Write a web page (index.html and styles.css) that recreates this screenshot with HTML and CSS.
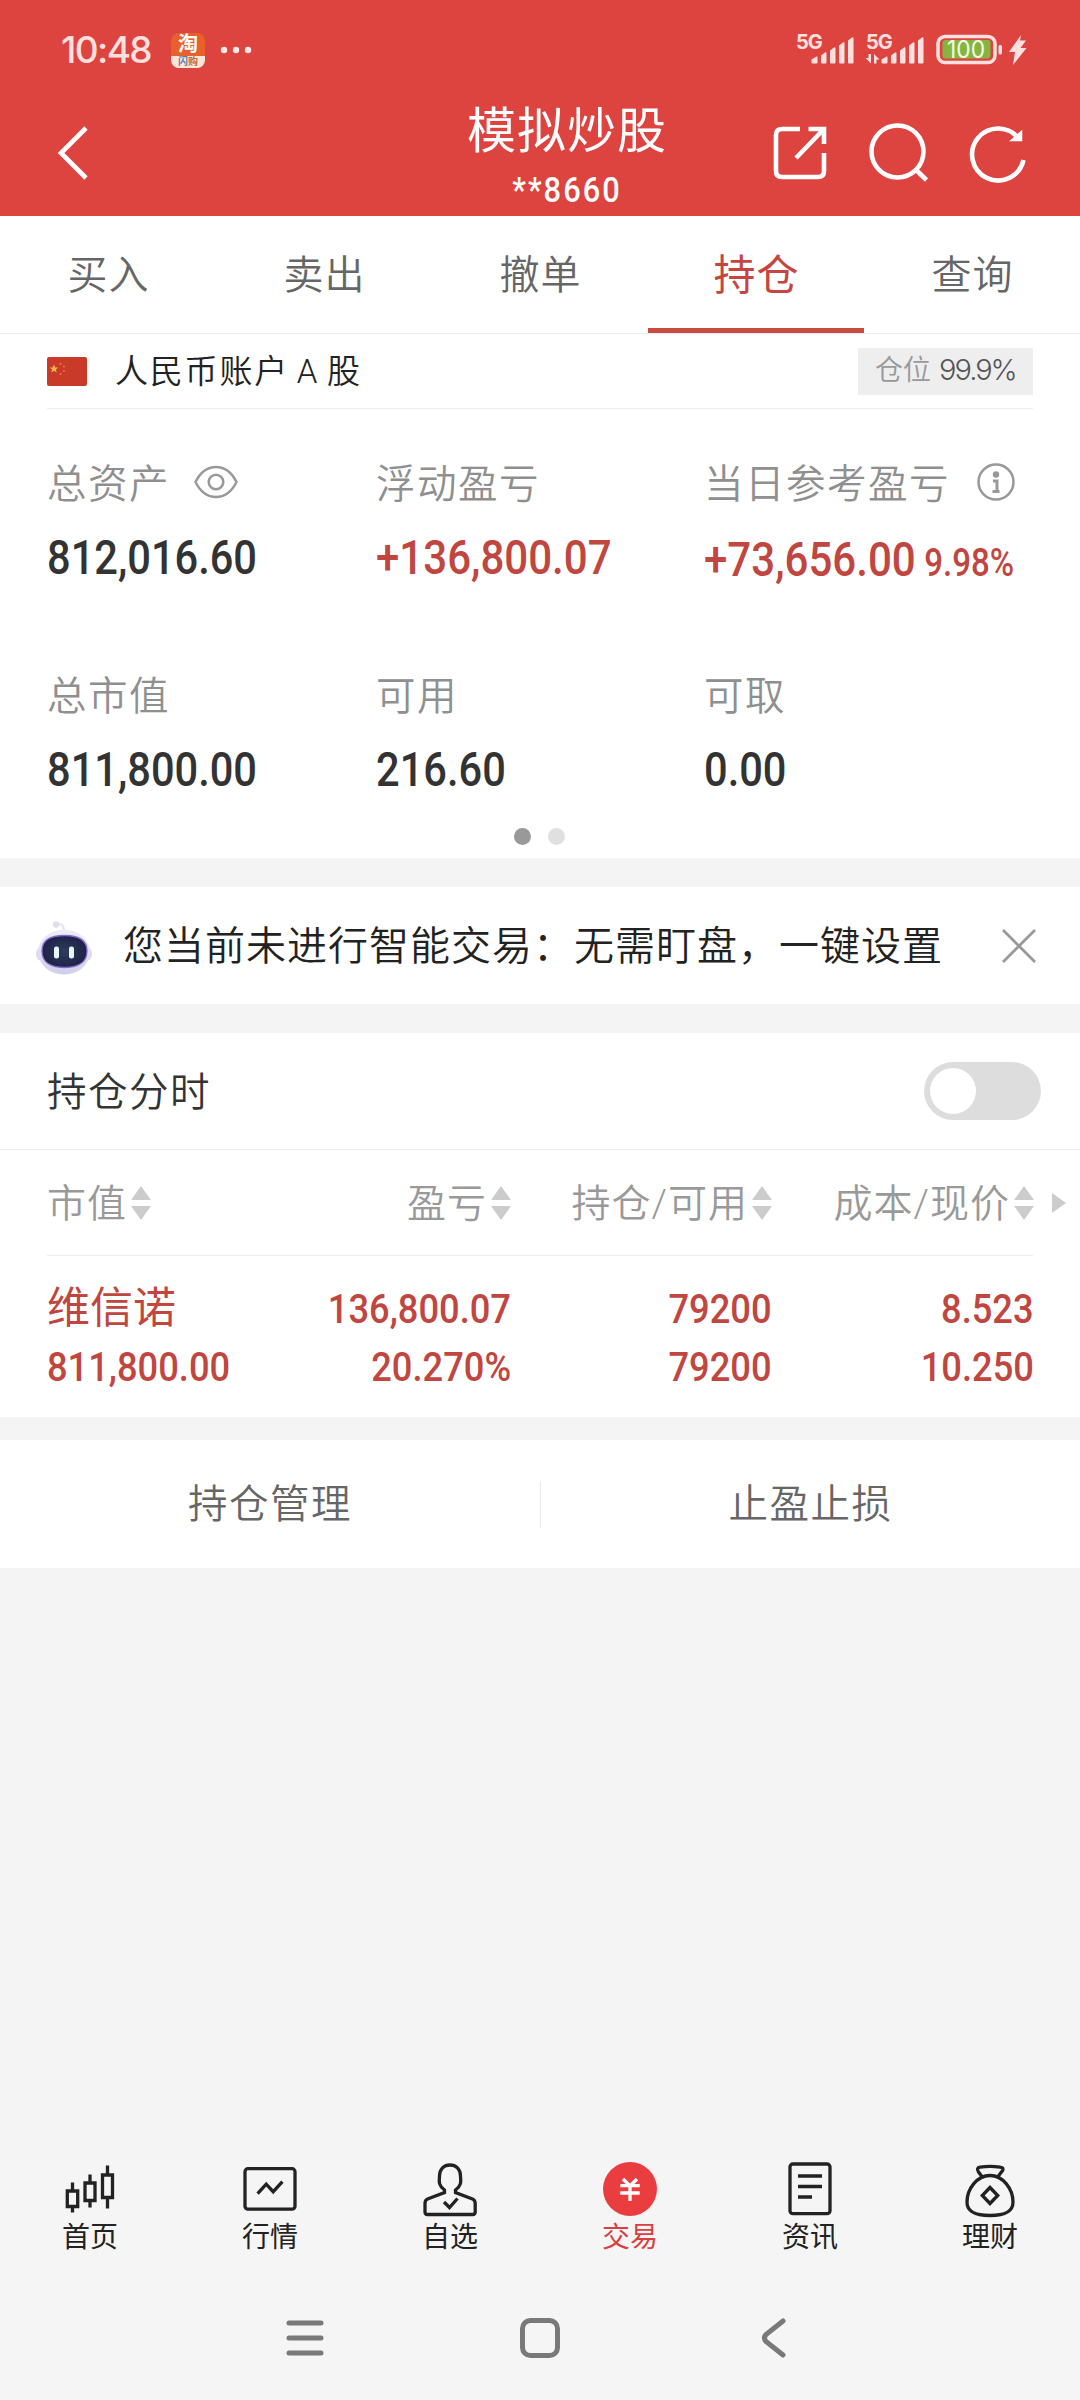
FILE: index.html
```html
<!DOCTYPE html>
<html lang="zh-CN">
<head>
<meta charset="utf-8">
<title>模拟炒股</title>
<link rel="stylesheet" href="styles.css">
</head>
<body>
<div class="screen">
  <header class="header">
    <div class="status">
      <span class="clock">10:48</span>
      <span class="app-icon"><span class="app-top">淘</span><span class="app-bottom"><i>闪</i>购</span></span>
      <svg class="more" width="32" height="8" viewBox="0 0 32 8" fill="#ffe9e8"><circle cx="4" cy="4" r="3.2"/><circle cx="16" cy="4" r="3.2"/><circle cx="28" cy="4" r="3.2"/></svg>
      <div class="networks"><span>5G</span><span>5G</span></div>
      <svg class="signals" width="234" height="36" viewBox="0 0 234 36">
        <g fill="#ffe0df">
          <path id="bars" d="M15.500 30.500v-3l5-3q1-.5 1 1v5q0 1-1 1h-4q-1 0-1-1zM25 30.500v-7l4-3q1.500-1 1.500 1v9q0 1-1 1h-3.500q-1 0-1-1zM34 30.500v-12l4-3q1.500-1 1.500 1v14q0 1-1 1h-3.500q-1 0-1-1zM43 30.500v-17l4-3q1.500-1 1.500 1v19q0 1-1 1h-3.500q-1 0-1-1zM52 30.500v-22l4-3q1.500-1 1.500 1v24q0 1-1 1h-3.500q-1 0-1-1z"/>
          <use href="#bars" x="70"/>
          <path d="M72.500 22h2.500v9.500l-5.500-5.500h3zM78 31.500v-9.500l5.500 5.500h-3v4z"/>
          <rect x="202.500" y="13" width="3.500" height="9.500" rx="1.500"/>
          <path d="M225 3 213 20h6l-2 13 13.500-17h-6l5.500-7.500h-6z"/>
        </g>
        <rect x="142" y="4.500" width="57" height="26" rx="7" fill="none" stroke="#ffe0df" stroke-width="3.500"/>
        <rect x="146.500" y="8" width="48" height="18.500" rx="3" fill="#85b541"/>
        <text x="151" y="25.500" class="charge" textLength="38" lengthAdjust="spacingAndGlyphs">100</text>
      </svg>
    </div>
    <div class="titlebar">
      <svg class="back" width="40" height="60" viewBox="0 0 40 60"><path d="M37 4 12 29 37 54" fill="none" stroke="#fff" stroke-width="4.600"/></svg>
      <div class="title"><h1>模拟炒股</h1><p>**8660</p></div>
      <svg class="tools" width="260" height="64" viewBox="0 0 260 64" fill="none" stroke="#fff" stroke-width="4.600">
        <path d="M28 7H10Q4 7 4 13V49Q4 55 10 55H46Q52 55 52 49V31M36.500 7H52V22M51 8 24 36"/>
        <circle cx="125.500" cy="29.500" r="26"/><path d="m143 47 11.500 11"/>
        <path d="M247 17A26 26 0 1 0 251.500 38"/><path d="M239 18.500 249.500 9.500v9z" fill="#fff" stroke-width="1.500"/>
      </svg>
    </div>
  </header>

  <nav class="tabs">
    <span>买入</span><span>卖出</span><span>撤单</span><span class="active">持仓</span><span>查询</span>
  </nav>

  <section class="account">
    <div class="account-row">
      <svg class="flag" width="40" height="29" viewBox="0 0 40 29"><rect width="40" height="29" rx="2" fill="#c93a28"/><path d="m7 7.500 1.200 3h3l-2.400 2 1 3L7 13.700 4.200 15.500l1-3-2.400-2h3z" fill="#f5b942"/><g fill="#dc7a35"><circle cx="13.500" cy="7" r="1.100"/><circle cx="17" cy="9.500" r="1.100"/><circle cx="17" cy="14" r="1.100"/><circle cx="13.500" cy="17" r="1.100"/></g></svg>
      <span class="account-name">人民币账户 A 股</span>
      <span class="position">仓位<b>99.9%</b></span>
    </div>
    <div class="stats">
      <div class="stat"><div class="label">总资产<svg class="eye" width="44" height="34" viewBox="0 0 44 34" fill="none" stroke="#999" stroke-width="2.500"><path d="M1.500 17C6 8 13 2 22 2s16 6 20.500 15C38 26 31 32 22 32S6 26 1.500 17z"/><circle cx="22" cy="17" r="7.300"/></svg></div><div class="value"><span>812,016.60</span></div></div>
      <div class="stat"><div class="label">浮动盈亏</div><div class="value red"><span>+136,800.07</span></div></div>
      <div class="stat"><div class="label">当日参考盈亏<svg class="info" width="38" height="38" viewBox="0 0 38 38"><circle cx="19" cy="19" r="17.500" fill="none" stroke="#999" stroke-width="2.500"/><circle cx="19" cy="11.500" r="3.200" fill="#999"/><path d="M16 18h4v10M15.500 28.500h7" fill="none" stroke="#999" stroke-width="3"/></svg></div><div class="value red day"><span>+73,656.00<small>9.98%</small></span></div></div>
      <div class="stat"><div class="label">总市值</div><div class="value"><span>811,800.00</span></div></div>
      <div class="stat"><div class="label">可用</div><div class="value"><span>216.60</span></div></div>
      <div class="stat"><div class="label">可取</div><div class="value"><span>0.00</span></div></div>
    </div>
    <div class="dots"><i class="on"></i><i></i></div>
  </section>

  <section class="notice">
    <svg width="60" height="58" viewBox="0 0 60 58">
      <defs>
        <linearGradient id="shell" x1="0" y1="0" x2="0" y2="1"><stop offset="0" stop-color="#eeedf8"/><stop offset="1" stop-color="#cfcdea"/></linearGradient>
        <radialGradient id="visor"><stop offset="0" stop-color="#303c5c"/><stop offset="1" stop-color="#1d2348"/></radialGradient>
      </defs>
      <path d="M23 7q7-1 7 7" fill="none" stroke="#e4e2f2" stroke-width="2"/><circle cx="22" cy="7.500" r="3.200" fill="#dfddee"/>
      <rect x="2" y="30" width="56" height="14" rx="6" fill="#dddcf1"/>
      <ellipse cx="30" cy="35" rx="26" ry="22.500" fill="url(#shell)"/>
      <path d="M8 34C8 22 18 18.500 30.500 18.500S53 22 53 34 43 50.500 30.500 50.500 8 46 8 34z" fill="url(#visor)" stroke="#8268cf" stroke-width="1.300"/>
      <rect x="20" y="29.500" width="5" height="12" rx="2.200" fill="#e3f7fb"/><rect x="35" y="29.500" width="5" height="12" rx="2.200" fill="#e3f7fb"/>
    </svg>
    <span class="notice-text">您当前未进行智能交易：无需盯盘，一键设置</span>
    <svg class="close" width="36" height="36" viewBox="0 0 36 36"><path d="m2 2 32 32M34 2 2 34" stroke="#999" stroke-width="2.800"/></svg>
  </section>

  <section class="holdings">
    <div class="switch-row"><span>持仓分时</span><i class="switch"></i></div>
    <div class="thead">
      <span><em>市值</em><svg class="sort" viewBox="0 0 20 34"><path d="M10 0 20 14H0zM0 20H20L10 34z"/></svg></span>
      <span><em>盈亏</em><svg class="sort" viewBox="0 0 20 34"><path d="M10 0 20 14H0zM0 20H20L10 34z"/></svg></span>
      <span><em>持仓/可用</em><svg class="sort" viewBox="0 0 20 34"><path d="M10 0 20 14H0zM0 20H20L10 34z"/></svg></span>
      <span><em>成本/现价</em><svg class="sort" viewBox="0 0 20 34"><path d="M10 0 20 14H0zM0 20H20L10 34z"/></svg></span>
      <svg class="next" width="14" height="20" viewBox="0 0 14 20"><path d="M0 0 14 10 0 20z"/></svg>
    </div>
    <div class="trow">
      <div><strong>维信诺</strong><span>811,800.00</span></div>
      <div><span>136,800.07</span><span>20.270%</span></div>
      <div><span>79200</span><span>79200</span></div>
      <div><span>8.523</span><span>10.250</span></div>
    </div>
  </section>

  <section class="actions"><span>持仓管理</span><span>止盈止损</span></section>

  <nav class="bottom">
    <div class="item"><svg viewBox="0 0 60 60"><path d="M12.500 20.500v8m0 16v6M30 12.500v8m0 18v7M47.500 3.500v9m0 23v11M7.300 29h10.400v15.500H7.300zM25 21h10v17.500H25zM42.500 13h10v22.500h-10z"/></svg><span>首页</span></div>
    <div class="item"><svg viewBox="0 0 60 60"><rect x="5" y="6.700" width="50" height="40.500" rx="3"/><path d="m17.600 31.700 8.600-9.500 7 7.500 9.200-10"/></svg><span>行情</span></div>
    <div class="item"><svg viewBox="0 0 60 60"><path d="M24.500 30.500V28C17.500 23 19.500 18 19.500 14c0-7 4.500-11 10.500-11s10.500 4 10.500 11c0 4 2 9-5 14v2.500l17 6.500q2.700 1 2.700 4.500V50q0 2.500-2.500 2.500H7.500q-2.500 0-2.500-2.500v-8.500Q5 38 7.500 37zM24 40l5.500 5.500 8-9"/></svg><span>自选</span></div>
    <div class="item current"><svg viewBox="0 0 60 60"><circle cx="30" cy="27" r="27"/><path d="m23 17 7 7 7-7M20.300 23.700h19.400M20.300 31h19.400M30 24v15"/></svg><span>交易</span></div>
    <div class="item"><svg viewBox="0 0 60 60"><rect x="10" y="2" width="40" height="49.700" rx="3"/><path d="M18 14h24M18 24.500h24M18 35h14"/></svg><span>资讯</span></div>
    <div class="item"><svg viewBox="0 0 60 60"><path d="M22 14.500 18.500 10Q16 5.700 20 5.200 30 3.500 40 5.200c4 .5 3.500 3 1.500 4.800L38 14.500M30 13.500C17 13.500 7 27 7 40c0 10 8 13.500 23 13.500S53 50 53 40C53 27 43 13.500 30 13.500zM30 25.500l7.700 8L30 41.500l-7.700-8z"/></svg><span>理财</span></div>
  </nav>
  <div class="system">
    <svg width="38" height="36" viewBox="0 0 38 36"><path d="M3 3h32M3 18h32M3 33h32"/></svg>
    <svg width="40" height="40" viewBox="0 0 40 40"><rect x="2.500" y="2.500" width="35" height="35" rx="8"/></svg>
    <svg width="26" height="40" viewBox="0 0 26 40"><path d="M22 3 5 16.500q-3 3.500 0 7L22 37"/></svg>
  </div>
</div>
</body>
</html>
```
FILE: styles.css
```css
* { box-sizing: border-box; }
body { margin: 0; background: #f4f4f4; font-family: Roboto, "Noto Sans CJK SC", sans-serif; font-weight: 350; }
h1, p { margin: 0; }
i, em { font-style: normal; }
svg { display: block; flex: none; }
.screen { width: 1080px; height: 2400px; display: flex; flex-direction: column; background: #f4f4f4; color: #333; }

.header { height: 216px; background: #dd4440; color: #fff; flex: none; }
.status { height: 100px; padding: 0 50px 0 61px; display: flex; align-items: center; }
.clock { font: 500 37px/44px Inter, sans-serif; color: #ffe0df; width: 110px; letter-spacing: -1.600px; white-space: nowrap; }
.app-icon { width: 34px; height: 35px; border-radius: 8px; overflow: hidden; background: #e8602c; display: flex; flex-direction: column; font-weight: 700; text-align: center; }
.app-top { height: 23px; font-size: 20px; line-height: 23px; color: #fff; }
.app-bottom { height: 12px; font-size: 10px; line-height: 11px; background: #fbe6d8; color: #c06a35; }
.app-bottom i { color: #5a7fae; }
.more { margin-left: 15px; }
.networks { display: flex; width: 140px; margin-left: auto; margin-right: -140px; padding-bottom: 17px; color: #ffe0df; font: 700 20px/24px Inter, sans-serif; letter-spacing: -1px; }
.networks span { width: 70px; }
.charge { font: 400 24px Inter, sans-serif; fill: #f4ffe6; }
.titlebar { display: flex; height: 116px; padding: 0 48px 0 49px; }
.back { margin-top: 24px; }
.title { width: 300px; margin-left: 328px; text-align: center; }
.title h1 { font-size: 49px; line-height: 60px; font-weight: 400; letter-spacing: 1px; margin-top: 2px; white-space: nowrap; }
.title p { font: 500 35px/40px Roboto, sans-serif; letter-spacing: 2.300px; margin-top: 9px; transform: scaleX(.88); }
.tools { margin-top: 22px; margin-left: auto; }

.tabs { height: 118px; display: grid; grid-template-columns: repeat(5, 1fr); background: #fff; border-bottom: 1px solid #ececec; flex: none; }
.tabs span { height: 117px; padding: 7px 0 0 1px; text-align: center; font-size: 40px; line-height: 105px; letter-spacing: 1px; color: #666; }
.tabs .active { color: #c5463f; font-size: 42px; font-weight: 400; border-bottom: 5px solid #c84b41; }

.account { height: 524px; background: #fff; padding: 0 47px; flex: none; }
.account-row { height: 75px; display: flex; align-items: center; border-bottom: 1px solid #ececec; }
.account-name { margin-left: 28px; padding-bottom: 4px; font-size: 33px; letter-spacing: 1.800px; word-spacing: -2px; font-weight: 350; color: #222; white-space: nowrap; }
.position { margin-left: auto; width: 175px; height: 47px; background: #eee; color: #999; font-size: 28px; line-height: 46px; padding-left: 17px; white-space: nowrap; }
.position b { margin-left: 8px; font: 300 29px Inter, sans-serif; letter-spacing: -2px; color: #555; }
.stats { display: grid; grid-template-columns: 329px 328px 1fr; grid-template-rows: 212px 212px; }
.stat { padding-top: 41px; }
.label { height: 60px; display: flex; align-items: center; font-size: 39.500px; letter-spacing: 1.500px; color: #8f8f8f; white-space: nowrap; }
.eye { margin-left: 24px; margin-top: 4px; }
.info { margin-left: 27px; margin-top: 4px; }
.value { margin-top: 18px; font: 500 49px/60px Roboto, sans-serif; white-space: nowrap; }
.value span { display: inline-block; transform: scaleX(.849); transform-origin: left; }
.value.red span { transform: scaleX(.858); }
.value small { font-size: 38.500px; margin-left: 10px; }
.day { padding-top: 2px; }
.red { color: #c0463f; }
.dots { display: flex; justify-content: center; gap: 17px; margin: -5px 2px 0 0; }
.dots i { width: 17px; height: 17px; border-radius: 50%; background: #e0e0e0; }
.dots .on { background: #999; }

.notice { height: 117px; margin-top: 29px; padding: 0 43px 0 34px; background: #fff; display: flex; align-items: center; flex: none; }
.notice-text { margin-left: 29px; padding-bottom: 5px; font-size: 40px; letter-spacing: 1px; color: #222; white-space: nowrap; }
.close { margin-left: auto; }

.holdings { height: 384px; margin-top: 29px; background: #fff; flex: none; }
.switch-row { height: 117px; padding: 0 39px 0 47px; display: flex; justify-content: space-between; align-items: center; border-bottom: 1px solid #ececec; font-size: 39.500px; letter-spacing: 1.500px; }
.switch-row span { padding-bottom: 5px; }
.switch { width: 117px; height: 58px; border-radius: 29px; background: #ddd; padding: 6px; }
.switch::before { content: ""; display: block; width: 46px; height: 46px; border-radius: 50%; background: #fff; }
.thead { height: 106px; margin: 0 47px; border-bottom: 1px solid #ececec; display: grid; grid-template-columns: 200px 264px 261px 262px 14px; align-items: center; font-size: 39px; letter-spacing: 1px; color: #999; }
.thead span { display: flex; align-items: center; justify-content: flex-end; }
.thead span:first-child { justify-content: flex-start; }
.thead em { padding-bottom: 5px; }
.sort { width: 20px; height: 34px; margin-left: 4px; fill: #ccc; }
.next { margin-left: 18px; fill: #ccc; }
.trow { margin: 0 47px; padding-top: 24px; display: grid; grid-template-columns: 200px 264px 261px 262px; color: #c0463f; font: 500 41px/58px Roboto, "Noto Sans CJK SC", sans-serif; }
.trow div { display: flex; flex-direction: column; align-items: flex-end; }
.trow div:first-child { align-items: flex-start; }
.trow strong { height: 58px; font-size: 43px; line-height: 57px; font-weight: 400; white-space: nowrap; }
.trow span { transform: scaleX(.885); transform-origin: right; }
.trow div:first-child span { transform-origin: left; }

.actions { height: 128px; margin-top: 23px; background: #fff; display: grid; grid-template-columns: 1fr 1fr; align-items: center; flex: none; }
.actions span { text-align: center; font-size: 39.500px; letter-spacing: 1.500px; line-height: 47px; color: #666; }
.actions span + span { border-left: 1px solid #e8e8e8; }

.bottom { height: 118px; margin-top: auto; display: grid; grid-template-columns: repeat(6, 1fr); background: #f5f5f5; flex: none; }
.item { display: flex; flex-direction: column; align-items: center; font-size: 28px; line-height: 36px; color: #222; }
.item svg { width: 60px; height: 60px; fill: none; stroke: #222; stroke-width: 3.300; }
.item span { margin-top: -2px; font-weight: 400; }
.current { color: #d8413f; }
.current circle { fill: #ea3d3f; stroke: none; }
.item.current path { stroke: #fff; }
.system { height: 120px; padding: 38px 0 42px 286px; display: flex; align-items: center; background: #f5f5f5; flex: none; }
.system svg { fill: none; stroke: #797979; stroke-width: 5; stroke-linecap: round; }
.system svg + svg { margin-left: 196px; }
.system svg + svg + svg { margin-left: 201px; }
```
